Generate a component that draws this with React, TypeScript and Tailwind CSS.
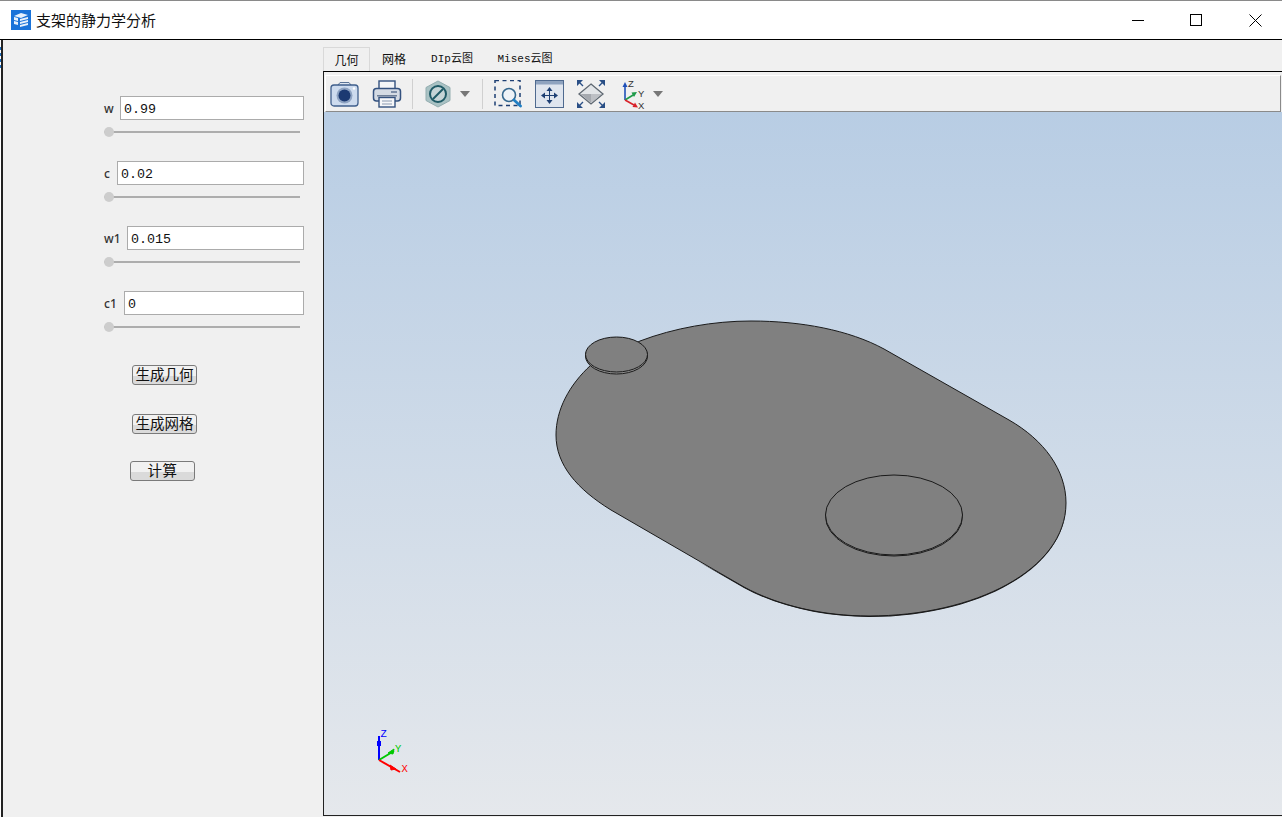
const MONO = "font-['Liberation_Mono','Noto_Sans_CJK_SC',monospace]";

const PARAMS = [
  { name: "w", value: "0.99", labelW: "w-[16px]" },
  { name: "c", value: "0.02", labelW: "w-[13px]" },
  { name: "w1", value: "0.015", labelW: "w-[23px]" },
  { name: "c1", value: "0", labelW: "w-[20px]" },
];

function CameraIcon() {
  return (
    <svg width="30" height="28" viewBox="0 0 30 28">
      <path d="M8 5 L10 2.5 H19 L21 5" fill="#dfe6f0" stroke="#5a7396" />
      <rect x="1" y="5" width="27" height="21" rx="3" fill="#cddbee" stroke="#3f5f8c" strokeWidth="1.3" />
      <circle cx="14.5" cy="15.5" r="8" fill="#8ea3c2" />
      <circle cx="14.5" cy="15.5" r="6" fill="#1c3a72" />
      <circle cx="24" cy="8.5" r="1.2" fill="#ffffff" />
    </svg>
  );
}

function PrinterIcon() {
  return (
    <svg width="30" height="28" viewBox="0 0 30 28">
      <rect x="7" y="1" width="16" height="8" fill="#f4f6f8" stroke="#34527f" strokeWidth="1.4" />
      <rect x="1.5" y="8.5" width="27" height="12.5" rx="3" fill="#d4dbe4" stroke="#34527f" strokeWidth="1.5" />
      <rect x="19" y="11" width="6" height="2" fill="#7d8ea8" />
      <rect x="5" y="15" width="20" height="1.5" fill="#6f8098" />
      <rect x="7" y="17.5" width="16" height="9.5" fill="#f6f7f9" stroke="#34527f" strokeWidth="1.4" />
      <path d="M10 21 H20 M10 24 H20" stroke="#8b9ab0" />
    </svg>
  );
}

function NoShadeIcon() {
  return (
    <svg width="26" height="28" viewBox="0 0 26 28">
      <path d="M13 1 L25 7.5 V20.5 L13 27 L1 20.5 V7.5 Z" fill="#a9c2c4" stroke="#93adb0" />
      <circle cx="13" cy="14" r="8" fill="#c5d4d6" stroke="#1f5a66" strokeWidth="2" />
      <path d="M8 19 L18 9" stroke="#1f5a66" strokeWidth="2" />
    </svg>
  );
}

function ZoomAreaIcon() {
  return (
    <svg width="28" height="28" viewBox="0 0 28 28">
      <rect x="1" y="0.5" width="25" height="25" fill="none" stroke="#1d3f73" strokeWidth="1.5" strokeDasharray="4 3.5" />
      <circle cx="15" cy="15" r="6.5" fill="#eef3f8" stroke="#35688f" strokeWidth="1.6" />
      <path d="M20 20 L26.5 26" stroke="#1f7fc4" strokeWidth="2.8" strokeLinecap="round" />
    </svg>
  );
}

function FitAllIcon() {
  return (
    <svg width="29" height="28" viewBox="0 0 29 28">
      <rect x="0.5" y="0.5" width="28" height="27" fill="#dfe5ee" stroke="#4f6a8f" />
      <rect x="1" y="1" width="27" height="3.5" fill="#8fa3bf" />
      <path d="M14.5 9 V22 M8 15.5 H21" stroke="#1d3f73" />
      <path d="M14.5 7 L11.5 11 H17.5 Z M14.5 24 L11.5 20 H17.5 Z M6 15.5 L10 12.5 V18.5 Z M23 15.5 L19 12.5 V18.5 Z" fill="#1d3f73" />
    </svg>
  );
}

function FitDiamondIcon() {
  return (
    <svg width="30" height="28" viewBox="0 0 30 28">
      <path d="M15 4 L27 14 L15 24 L3 14 Z" fill="#e2e5e8" stroke="#5f6872" strokeWidth="1.3" />
      <path d="M4.5 14 H25.5 L15 23 Z" fill="#a5a9af" />
      <path d="M15 14 L25.5 14 L15 23 Z" fill="#bdc0c5" />
      <path d="M1 0 L7 0 L1 6 Z M29 0 L23 0 L29 6 Z M1 28 L7 28 L1 22 Z M29 28 L23 28 L29 22 Z" fill="#2a4f86" />
      <path d="M2 1 L7 6 M28 1 L23 6 M2 27 L7 22 M28 27 L23 22" stroke="#2a4f86" strokeWidth="1.4" />
    </svg>
  );
}

function AxisIcon() {
  return (
    <svg width="28" height="34" viewBox="0 -3 28 34">
      <path d="M4 20 V6" stroke="#2050b8" strokeWidth="1.6" />
      <path d="M4 2 L1.5 7 H6.5 Z" fill="#2050b8" />
      <path d="M4 20 L13 14.5" stroke="#1f9b4a" strokeWidth="1.6" />
      <path d="M16 12 L10.5 12.5 L13 17 Z" fill="#1f9b4a" />
      <path d="M4 20 L13 25" stroke="#d8222a" strokeWidth="1.6" />
      <path d="M17 27.5 L11.5 27 L14 22.5 Z" fill="#d8222a" />
      <g fontFamily="'Liberation Sans', sans-serif" fontSize="9.5" fill="#333333">
        <text x="7" y="7">Z</text>
        <text x="17" y="17">Y</text>
        <text x="17" y="29">X</text>
      </g>
    </svg>
  );
}

function Caret() {
  return <div className="w-0 h-0 border-x-[5px] border-x-transparent border-t-[6px] border-t-[#777777]" />;
}

function Sep() {
  return <div className="w-px h-[30px] bg-[#d0d0d0]" />;
}

function ParamField({ name, value, labelW }: { name: string; value: string; labelW: string }) {
  return (
    <div className="flex flex-col w-[200px] h-[65px]">
      <div className="flex items-center h-6">
        <span className={`${labelW} mt-[2px] text-[12px] font-['Noto_Sans',sans-serif] font-medium text-[#333333] leading-none`}>{name}</span>
        <div className={`flex-1 h-6 bg-white border border-[#ababab] pl-[3px] pt-[3px] flex items-center text-[13.33px] text-[#111111] ${MONO}`}>
          {value}
        </div>
      </div>
      <div className="relative mt-[11px] w-[196px] h-[2px] bg-[#adadad]">
        <div className="absolute left-0 -top-1 w-[10px] h-[10px] rounded-full bg-[#cdcdcd]" />
      </div>
    </div>
  );
}

function PushButton({ label, wide }: { label: string; wide?: boolean }) {
  return (
    <button className={`block w-[65px] h-5 pb-px border border-[#7a7a7a] rounded-[3px] bg-[linear-gradient(#f1f1f1_0%,#f1f1f1_58%,#dadada_58%,#dadada_100%)] text-[#111111] leading-none text-[14.5px] font-['Noto_Sans_CJK_SC',sans-serif] ${wide ? "tracking-[0.5px]" : ""}`}>
      {label}
    </button>
  );
}

function Scene() {
  return (
    <svg width="958" height="703" viewBox="325 112 958 703" className="block">
      {/* plate thickness */}
      <path
        d="M1067 504 C1067 571 975 617 870 617 C825 617 780 607 745 588 L700 562 L745 586 C780 605 825 615 870 615 C975 615 1067 569 1067 503 Z"
        fill="#1a1a1a"
      />
      <path
        d="M641 341 C675 328 715 321 752 321 C802 321 850 330 885 349 L1010 420 C1045 440 1067 470 1067 503 C1067 570 975 616 870 616 C825 616 780 606 745 587 L612 510 C578 489 557 465 557 435 C557 410 570 385 592 365 Z"
        fill="#808080"
        stroke="#1a1a1a"
        strokeWidth="1"
      />
      {/* small boss */}
      <ellipse cx="617.5" cy="356" rx="31" ry="18" fill="#909090" stroke="#1a1a1a" />
      <ellipse cx="617.5" cy="354.5" rx="31" ry="17.5" fill="#808080" stroke="#1a1a1a" />
      {/* big boss */}
      <ellipse cx="895" cy="516.5" rx="68.5" ry="39.5" fill="#909090" stroke="#1a1a1a" />
      <ellipse cx="895" cy="515" rx="68.5" ry="40" fill="#808080" stroke="#1a1a1a" />
      {/* triad */}
      <g strokeWidth="2" fill="none">
        <path d="M380 760 V736" stroke="#0000ff" />
        <path d="M380 760 L395 751" stroke="#00c800" />
        <path d="M380 760 L401 772" stroke="#ff0000" />
      </g>
      <rect x="378" y="741" width="4" height="5" fill="#0000ff" />
      <path d="M389 753 L395 749 L394 754 Z" fill="#00c800" stroke="#00c800" />
      <path d="M391 765 L397 769 L392 770 Z" fill="#ff0000" stroke="#ff0000" />
      <g fontFamily="'Liberation Mono', monospace" fontSize="10.5">
        <text x="381.5" y="737" fill="#0000ff">Z</text>
        <text x="396" y="752" fill="#00c800">Y</text>
        <text x="402.5" y="772" fill="#ff0000">X</text>
      </g>
    </svg>
  );
}

export default function App() {
  return (
    <div className="relative w-[1282px] h-[817px] bg-white overflow-hidden flex flex-col font-['Noto_Sans_CJK_SC',sans-serif]">
      {/* desktop peeking through at the left edge */}
      <div className="absolute left-0 top-[47px] w-px h-6 bg-[repeating-linear-gradient(#1f6fc0_0px,#1f6fc0_3px,#ffffff_3px,#ffffff_6px)]" />

      {/* Title bar */}
      <div className="h-10 shrink-0 bg-white border-t border-[#8a8a8a] border-b-[1.5px] border-b-black flex items-center pl-[11px]">
        <div className="w-5 h-5 bg-[#1a73d9] mr-[5px] flex items-center justify-center">
          <svg width="16" height="16" viewBox="0 0 16 16">
            <path d="M1 4 L8 1 L15 3 L8 6 Z M1 5 V8 L5 9 V6 Z M1 9 V12 L5 13 V10 Z M7 7 L15 5 V7 L7 9 Z M7 10 L15 8 V10 L7 12 Z M7 13 L15 11 V13 L7 15 Z" fill="#ffffff" opacity="0.9" />
          </svg>
        </div>
        <span className="text-[15px] text-[#111111] leading-none -mt-[2px]">支架的静力学分析</span>
        <div className="ml-auto flex items-center h-full">
          <div className="w-[58px] flex justify-center"><div className="w-3 h-px bg-black" /></div>
          <div className="w-[58px] mr-[3px] flex justify-center"><div className="w-3 h-3 border border-black" /></div>
          <div className="w-[54px] flex justify-center">
            <svg width="13" height="13" viewBox="0 0 13 13"><path d="M0.5 0.5 L12.5 12.5 M12.5 0.5 L0.5 12.5" stroke="#000000" /></svg>
          </div>
        </div>
      </div>

      <div className="flex-1 flex bg-[#f0f0f0] border-l-2 border-l-[#222222] ml-[1px] min-h-0">
        {/* Left panel */}
        <div className="w-[320px] shrink-0 pl-[101px] pt-[56px] flex flex-col">
          {PARAMS.map((p) => (
            <ParamField key={p.name} {...p} />
          ))}
          <div className="pl-[28px] mt-[9px]"><PushButton label="生成几何" /></div>
          <div className="pl-[28px] mt-[29px]"><PushButton label="生成网格" /></div>
          <div className="pl-[26px] mt-[27px]"><PushButton label="计算" wide /></div>
        </div>

        {/* Right panel */}
        <div className="flex-1 flex flex-col pt-[7px] pb-px min-w-0">
          <div className="flex h-6 items-end text-[12px] text-[#111111] leading-none">
            <div className="w-[47px] h-6 bg-[#f0f0f0] border border-b-0 border-[#d9d9d9] flex items-center justify-center">几何</div>
            <div className="w-[48px] h-6 flex items-center justify-center">网格</div>
            <div className={`w-[68px] h-6 flex items-center justify-center text-[11px] ${MONO}`}>DIp云图</div>
            <div className={`w-[78px] h-6 flex items-center justify-center text-[11px] ${MONO}`}>Mises云图</div>
          </div>
          <div className="flex-1 flex flex-col border-t-[1.5px] border-t-black border-l border-l-[#222222] border-b border-b-[#222222] min-h-0">
            <div className="h-10 shrink-0 pt-[3px]">
              <div className="h-[37px] flex items-center pl-[4px] ml-px mr-px border-t border-t-white border-l border-l-white border-b border-b-[#8a8a8a] border-r border-r-[#8a8a8a]">
                <CameraIcon />
                <div className="ml-[12px]"><PrinterIcon /></div>
                <div className="ml-[10px]"><Sep /></div>
                <div className="ml-[12px]"><NoShadeIcon /></div>
                <div className="ml-[9px]"><Caret /></div>
                <div className="ml-[12px]"><Sep /></div>
                <div className="ml-[11px]"><ZoomAreaIcon /></div>
                <div className="ml-[13px]"><FitAllIcon /></div>
                <div className="ml-[12px]"><FitDiamondIcon /></div>
                <div className="ml-[15px]"><AxisIcon /></div>
                <div className="ml-[4px]"><Caret /></div>
              </div>
            </div>
            <div className="flex-1 min-h-0 overflow-hidden bg-[linear-gradient(#b8cde4,#e5e8ec)]">
              <Scene />
            </div>
          </div>
        </div>
      </div>
    </div>
  );
}
